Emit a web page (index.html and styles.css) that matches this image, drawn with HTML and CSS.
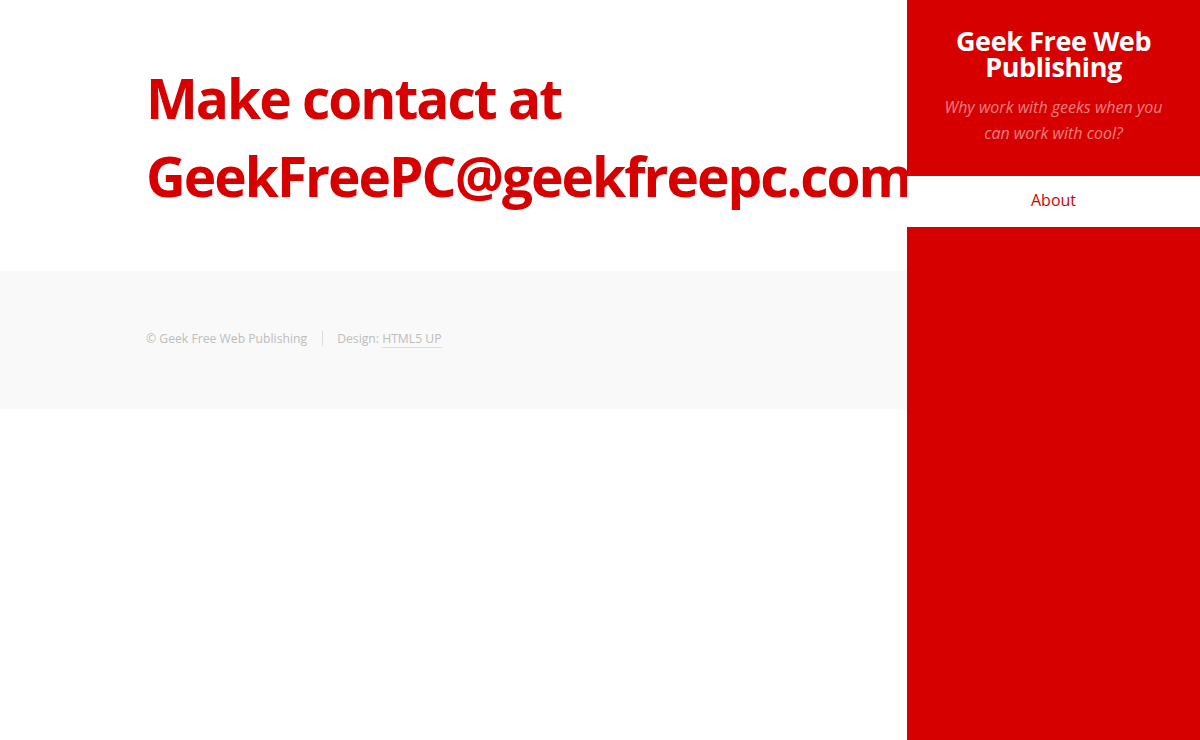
FILE: index.html
```html
<!DOCTYPE html>
<html lang="en">
<head>
<meta charset="utf-8">
<title>Geek Free Web Publishing</title>
<link rel="stylesheet" href="styles.css">
</head>
<body>
<div class="page">
  <main class="main">
    <section class="content">
      <h2 class="contact">Make contact at GeekFreePC@geekfreepc.com</h2>
    </section>
    <footer class="footer">
      <ul class="copyright">
        <li>&copy; Geek Free Web Publishing</li>
        <li>Design: <a href="#">HTML5 UP</a></li>
      </ul>
    </footer>
  </main>
  <aside class="sidebar">
    <header class="brand">
      <h1 class="title">Geek Free Web Publishing</h1>
      <p class="tagline">Why work with geeks when you can work with cool?</p>
    </header>
    <nav class="nav">
      <a href="#">About</a>
    </nav>
  </aside>
</div>
</body>
</html>
```
FILE: styles.css
```css
html, body {
  margin: 0;
  padding: 0;
  height: 100%;
}
body {
  background: #fff;
  font-family: "Open Sans", "Noto Sans", sans-serif;
  overflow: hidden;
}
.page {
  display: flex;
  height: 740px;
}
.main {
  width: 907px;
  flex: none;
}
.content {
  padding: 59px 0 0 146px;
  height: 271px;
  box-sizing: border-box;
}
.contact {
  margin: 0;
  width: 600px;
  color: #d60000;
  font-size: 55px;
  font-weight: 700;
  line-height: 78px;
  letter-spacing: -2px;
}
.footer {
  background: #f9f9f9;
  height: 138px;
  display: flex;
  align-items: center;
  padding-left: 146px;
}
.copyright {
  list-style: none;
  margin: -3px 0 0;
  padding: 0;
  display: flex;
  align-items: center;
  font-size: 12.2px;
  color: #bdbdbd;
}
.copyright li + li {
  border-left: 1px solid #dcdcdc;
  margin-left: 15px;
  padding-left: 14px;
  line-height: 15px;
}
.copyright a {
  color: #bdbdbd;
  text-decoration: none;
  border-bottom: 1px solid #dcdcdc;
}
.sidebar {
  width: 293px;
  flex: none;
  background: #d60000;
  position: relative;
  z-index: 2;
}
.brand {
  padding: 28px 25px 0;
  height: 176px;
  box-sizing: border-box;
  text-align: center;
}
.title {
  margin: 0;
  color: #fff;
  font-size: 27px;
  font-weight: 700;
  line-height: 26px;
  letter-spacing: -0.4px;
}
.tagline {
  margin: 14px 8px 0;
  color: rgba(255, 255, 255, 0.5);
  font-size: 16px;
  font-style: italic;
  line-height: 26px;
}
.nav {
  background: #fff;
  height: 51px;
  display: flex;
  align-items: center;
  justify-content: center;
}
.nav a {
  color: #d60000;
  text-decoration: none;
  font-size: 16px;
  margin-top: -3px;
}
```
